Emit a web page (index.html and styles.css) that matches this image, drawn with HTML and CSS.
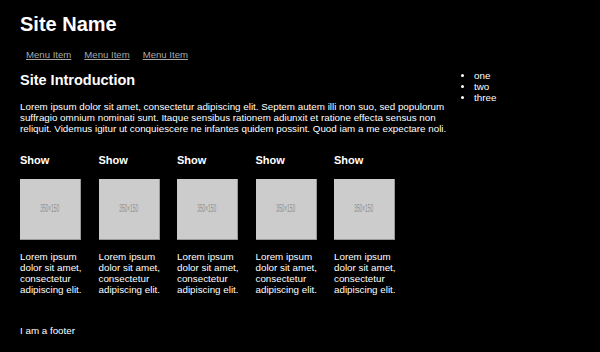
FILE: index.html
```html
<!DOCTYPE html>
<html>
<head>
<meta charset="utf-8">
<link rel="stylesheet" href="styles.css">
</head>
<body>
<header class="site-header">
  <h1 class="site-name">Site Name</h1>
  <nav class="menu">
    <a href="#" class="menu-item">Menu Item</a>
    <a href="#" class="menu-item">Menu Item</a>
    <a href="#" class="menu-item">Menu Item</a>
  </nav>
</header>
<div class="intro-row">
  <section class="intro">
    <h2 class="intro-title">Site Introduction</h2>
    <p class="intro-text">Lorem ipsum dolor sit amet, consectetur adipiscing elit. Septem autem illi non suo, sed populorum suffragio omnium nominati sunt. Itaque sensibus rationem adiunxit et ratione effecta sensus non reliquit. Videmus igitur ut conquiescere ne infantes quidem possint. Quod iam a me expectare noli.</p>
  </section>
  <aside class="side">
    <ul class="side-list">
      <li>one</li>
      <li>two</li>
      <li>three</li>
    </ul>
  </aside>
</div>
<div class="shows">
  <div class="show">
    <h3 class="show-title">Show</h3>
    <div class="thumb"><span class="thumb-label">350×150</span></div>
    <p class="show-text">Lorem ipsum dolor sit amet, consectetur adipiscing elit.</p>
  </div>
  <div class="show">
    <h3 class="show-title">Show</h3>
    <div class="thumb"><span class="thumb-label">350×150</span></div>
    <p class="show-text">Lorem ipsum dolor sit amet, consectetur adipiscing elit.</p>
  </div>
  <div class="show">
    <h3 class="show-title">Show</h3>
    <div class="thumb"><span class="thumb-label">350×150</span></div>
    <p class="show-text">Lorem ipsum dolor sit amet, consectetur adipiscing elit.</p>
  </div>
  <div class="show">
    <h3 class="show-title">Show</h3>
    <div class="thumb"><span class="thumb-label">350×150</span></div>
    <p class="show-text">Lorem ipsum dolor sit amet, consectetur adipiscing elit.</p>
  </div>
  <div class="show">
    <h3 class="show-title">Show</h3>
    <div class="thumb"><span class="thumb-label">350×150</span></div>
    <p class="show-text">Lorem ipsum dolor sit amet, consectetur adipiscing elit.</p>
  </div>
</div>
<footer class="footer">I am a footer</footer>
</body>
</html>
```

FILE: styles.css
```css
html, body {
  margin: 0;
  padding: 0;
  background: #000;
}
body {
  color: #fff;
  font-family: "Liberation Sans", Arial, Helvetica, sans-serif;
  font-size: 9.8px;
  line-height: 10.8px;
  padding: 12px 20px 0 20px;
  width: 560px;
}
.site-name {
  margin: 0;
  font-size: 20px;
  line-height: 24px;
  font-weight: bold;
}
.menu {
  display: flex;
  gap: 13px;
  margin: 13px 0 0 6px;
  line-height: 11px;
}
.menu-item {
  color: #a8a8a8;
  font-size: 9.6px;
  text-decoration: underline;
}
.intro-row {
  display: flex;
  margin-top: 12px;
}
.intro {
  width: 435px;
}
.intro-title {
  margin: 0;
  font-size: 14.5px;
  line-height: 17px;
  font-weight: bold;
}
.intro-text {
  margin: 13px 0 0 0;
}
.side {
  margin-top: -2px;
}
.side-list {
  margin: 0;
  padding-left: 19px;
  line-height: 11px;
}
.shows {
  display: grid;
  grid-template-columns: repeat(5, 78.5px);
  margin-top: 20px;
}
.show-title {
  margin: 0;
  font-size: 11px;
  line-height: 13px;
  font-weight: bold;
}
.thumb {
  margin-top: 12px;
  width: 61px;
  height: 61px;
  box-sizing: border-box;
  background: #cccccc;
  border-right: 1px solid #999;
  border-bottom: 1px solid #999;
  display: flex;
  align-items: center;
  justify-content: center;
}
.thumb-label {
  display: inline-block;
  color: #8c8c8c;
  font-size: 8px;
  line-height: 8px;
  transform: scale(0.6, 1.3);
}
.show-text {
  margin: 12px 0 0 0;
  width: 72px;
}
.footer {
  margin-top: 30px;
}
```
